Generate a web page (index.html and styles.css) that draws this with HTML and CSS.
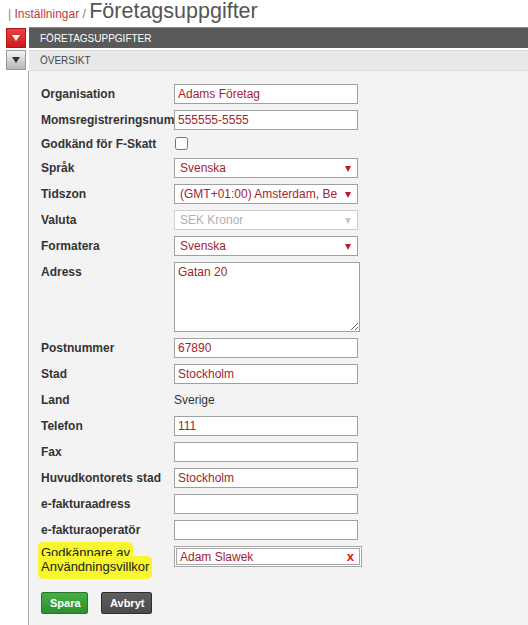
FILE: index.html
```html
<!DOCTYPE html>
<html lang="sv">
<head>
<meta charset="utf-8">
<title>Företagsuppgifter</title>
<link rel="stylesheet" href="styles.css">
</head>
<body>
<div class="crumbs"><span class="sep">|</span> <a class="crumb-link">Inställningar</a> <span class="slash">/</span> <span class="page-title">Företagsuppgifter</span></div>

<div class="sec-row">
  <span class="toggle toggle-red"><span class="tri tri-white"></span></span>
  <div class="bar bar-dark">FÖRETAGSUPPGIFTER</div>
</div>
<div class="sec-row sec-row-2">
  <span class="toggle toggle-gray"><span class="tri tri-dark"></span></span>
  <div class="bar bar-light">ÖVERSIKT</div>
</div>

<div class="content">
  <div class="row"><label class="lbl">Organisation</label><input class="field" value="Adams Företag"></div>
  <div class="row"><label class="lbl">Momsregistreringsnummer</label><input class="field" value="555555-5555"></div>
  <div class="row row-check"><label class="lbl lbl-check">Godkänd för F-Skatt</label><input type="checkbox" class="check"></div>
  <div class="row"><label class="lbl">Språk</label><div class="select"><span class="sel-text">Svenska</span><span class="arrow"></span></div></div>
  <div class="row"><label class="lbl">Tidszon</label><div class="select"><span class="sel-text">(GMT+01:00) Amsterdam, Berlin, Bern, Rom, Stockholm, Wien</span><span class="arrow"></span></div></div>
  <div class="row"><label class="lbl">Valuta</label><div class="select select-disabled"><span class="sel-text">SEK Kronor</span><span class="arrow"></span></div></div>
  <div class="row"><label class="lbl">Formatera</label><div class="select"><span class="sel-text">Svenska</span><span class="arrow"></span></div></div>
  <div class="row"><label class="lbl">Adress</label><textarea class="area">Gatan 20</textarea></div>
  <div class="row"><label class="lbl">Postnummer</label><input class="field" value="67890"></div>
  <div class="row"><label class="lbl">Stad</label><input class="field" value="Stockholm"></div>
  <div class="row"><label class="lbl">Land</label><span class="plain">Sverige</span></div>
  <div class="row"><label class="lbl">Telefon</label><input class="field" value="111"></div>
  <div class="row"><label class="lbl">Fax</label><input class="field" value=""></div>
  <div class="row"><label class="lbl">Huvudkontorets stad</label><input class="field" value="Stockholm"></div>
  <div class="row"><label class="lbl">e-fakturaadress</label><input class="field" value=""></div>
  <div class="row"><label class="lbl">e-fakturaoperatör</label><input class="field" value=""></div>
  <div class="row row-approver">
    <label class="lbl lbl-mark"><span class="mark">Godkännare av<br>Användningsvillkor</span></label>
    <div class="token-box"><span class="token-text">Adam Slawek</span><span class="token-x">x</span></div>
  </div>
  <div class="actions">
    <button class="btn btn-save">Spara</button>
    <button class="btn btn-cancel">Avbryt</button>
  </div>
</div>
</body>
</html>
```

FILE: styles.css
```css
html, body {
  margin: 0;
  padding: 0;
  background: #ffffff;
  font-family: "Liberation Sans", Arial, sans-serif;
  color: #333;
  height: 100%;
}
body {
  display: flex;
  flex-direction: column;
}
.crumbs {
  height: 27px;
  padding-left: 8px;
  line-height: 22px;
  white-space: nowrap;
  font-size: 12px;
  color: #888;
}
.crumb-link { color: #c0393f; }
.slash { color: #777; }
.page-title {
  font-size: 21.5px;
  color: #555;
}
.sec-row {
  display: flex;
  align-items: stretch;
  height: 21px;
}
.sec-row-2 {
  margin-top: 2px;
}
.toggle {
  flex: none;
  width: 20px;
  margin-left: 6px;
  margin-right: 3px;
  box-sizing: border-box;
  display: flex;
  align-items: center;
  justify-content: center;
}
.toggle-red {
  background: linear-gradient(#ee4040, #c91b1b);
  border: 1px solid #b01818;
  margin-top: 1px;
  height: 20px;
}
.toggle-gray {
  background: linear-gradient(#f5f5f5, #b5b5b5);
  border: 1px solid #999;
  height: 20px;
}
.tri {
  width: 0;
  height: 0;
  border-left: 4px solid transparent;
  border-right: 4px solid transparent;
  border-top: 6px solid #fff;
}
.tri-dark { border-top-color: #333; }
.bar {
  flex: 1;
  box-sizing: border-box;
  font-size: 10px;
  padding-left: 11px;
  display: flex;
  align-items: center;
}
.bar-dark {
  background: #5a5a5a;
  border-top: 1px solid #8a8a8a;
  color: #fff;
}
.bar-light {
  background: #e9e9e9;
  border-top: 1px solid #dcdcdc;
  border-bottom: 1px solid #dcdcdc;
  color: #444;
}
.content {
  flex: 1;
  margin-left: 28px;
  border-left: 1px solid #a8a8a8;
  background: #f3f3f3;
  padding: 13px 0 0 12px;
}
.row {
  display: flex;
  align-items: flex-start;
  margin-bottom: 6px;
}
.lbl {
  flex: none;
  width: 133px;
  font-weight: bold;
  font-size: 12px;
  line-height: 20px;
  white-space: nowrap;
  overflow: hidden;
  color: #333;
}
.row-check {
  height: 16px;
}
.lbl-check {
  line-height: 17px;
}
.check {
  margin: 1px 0 0 1px;
  width: 13px;
  height: 13px;
}
.field, .select, .area, .token-box {
  box-sizing: border-box;
  width: 184px;
  height: 20px;
  border: 1px solid #a0a0a0;
  background: #fff;
  font-family: "Liberation Sans", Arial, sans-serif;
  font-size: 12px;
  color: #a0262e;
  padding: 0 3px;
  margin: 0;
  outline: none;
}
.field {
  border-radius: 0;
}
.select {
  position: relative;
  display: flex;
  align-items: center;
  padding-left: 5px;
  padding-right: 20px;
  overflow: hidden;
}
.sel-text {
  white-space: nowrap;
  overflow: hidden;
}
.arrow {
  position: absolute;
  right: 6px;
  top: 7px;
  width: 0;
  height: 0;
  border-left: 3px solid transparent;
  border-right: 3px solid transparent;
  border-top: 6px solid #c4162a;
}
.select-disabled {
  border-color: #cfcfcf;
  color: #b0b0b0;
}
.select-disabled .arrow {
  border-top-color: #c8c8c8;
}
.area {
  width: 186px;
  height: 70px;
  padding: 2px 3px;
  resize: both;
  line-height: 14px;
}
.plain {
  font-size: 12px;
  line-height: 20px;
  color: #333;
}
.lbl-mark {
  font-weight: normal;
  font-size: 13px;
  line-height: 14px;
  padding-top: 0;
  overflow: visible;
  position: relative;
  left: -3px;
}
.mark {
  background: #f8f62c;
  padding: 3px 3px 5px 3px;
  border-radius: 5px;
  -webkit-box-decoration-break: clone;
  box-decoration-break: clone;
  color: #222;
}
.token-box {
  width: 188px;
  height: 21px;
  border: 3px double #a6a6a6;
  display: flex;
  align-items: center;
  justify-content: space-between;
  padding: 0 5px 0 3px;
  color: #a0262e;
}
.token-x {
  color: #d01a1a;
  font-weight: bold;
  font-size: 13px;
}
.actions {
  display: flex;
  gap: 13px;
  margin-top: 18px;
}
.btn {
  height: 22px;
  box-sizing: border-box;
  border-radius: 2px;
  font-family: "Liberation Sans", Arial, sans-serif;
  font-size: 11px;
  font-weight: bold;
  color: #fff;
  padding: 0 8px;
  cursor: pointer;
}
.btn-save {
  width: 47px;
  background: linear-gradient(#45b045, #2c8f2c);
  border: 1px solid #23782a;
}
.btn-cancel {
  width: 51px;
  background: linear-gradient(#5e5e5e, #4a4a4a);
  border: 1px solid #2e2e2e;
}
```
